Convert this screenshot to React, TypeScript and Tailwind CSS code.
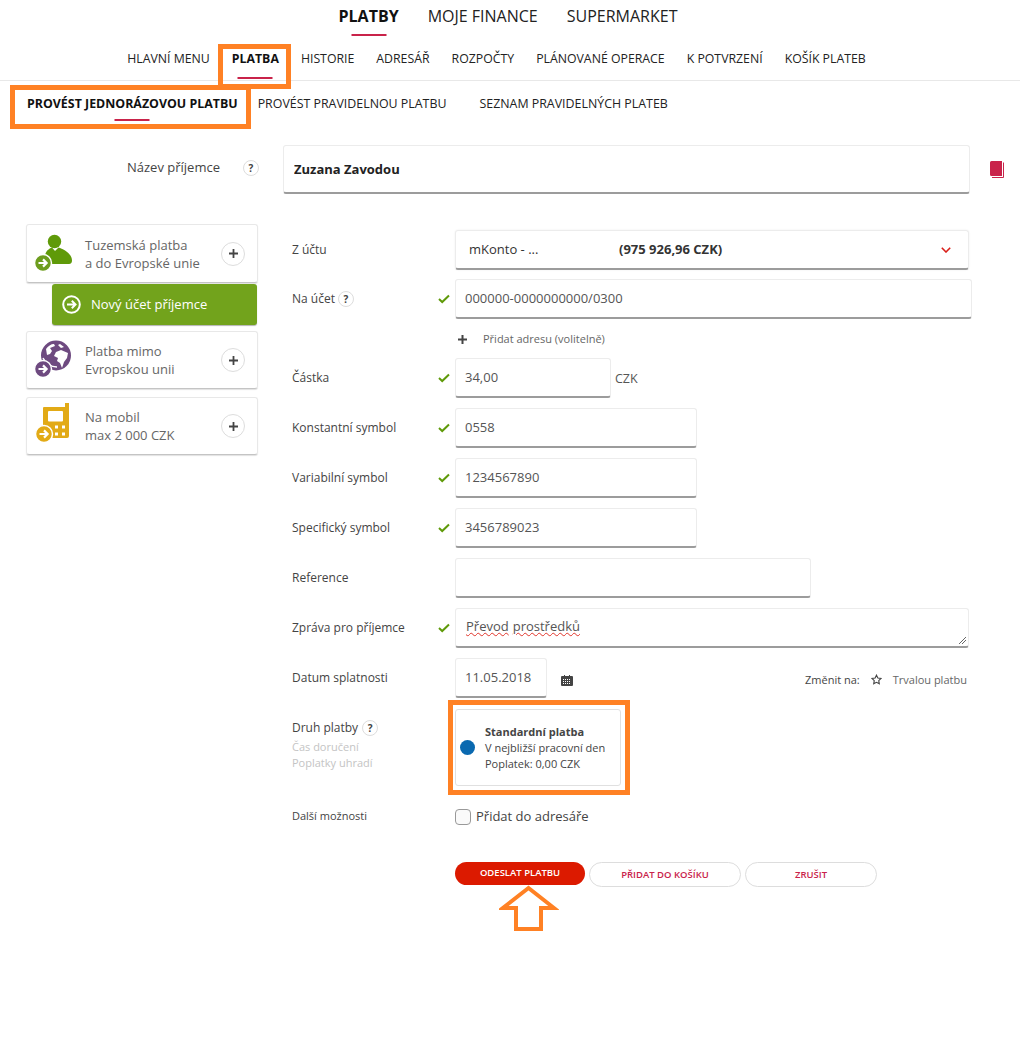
import type { ReactNode } from 'react';

const font = 'font-["Open_Sans",sans-serif]';

function Badge({ color, cx, cy }: { color: string; cx: number; cy: number }) {
  return (
    <g transform={`translate(${cx - 8} ${cy - 8})`}>
      <circle cx="8" cy="8" r="8.500" fill={color} stroke="#fff" strokeWidth="1.500" />
      <path d="M3.500 8h8M8 4.400 11.600 8 8 11.600" fill="none" stroke="#fff" strokeWidth="2.200" />
    </g>
  );
}

function PersonIcon() {
  return (
    <svg className="overflow-visible" width="36" height="38" viewBox="0 0 36 38">
      <circle cx="18.500" cy="6.500" r="6.700" fill="#5f9a09" />
      <path d="M9 22c0-5 3-8 7-9.500l3 3.500 3.500-3.500c5 1.500 13.500 6 13.500 13 0 2-1 3.500-3 3.500H9z" fill="#5f9a09" />
      <Badge color="#6d9d1e" cx={7} cy={28} />
    </svg>
  );
}

function GlobeIcon() {
  return (
    <svg className="overflow-visible" width="36" height="38" viewBox="0 0 36 38">
      <circle cx="20" cy="14.500" r="15" fill="#6e4a80" />
      <path d="M10 8c2-3 5-5 8-5l1 2-5 2 2 3-2 3-3 1zM20 11l5-2 7 3-1 5-3 4-2 6-2-5-3-2 1-3-4-2zM24 3l4 3-3 1-3-3z" fill="#fff" />
      <path d="M7 17c3 6 8 9 14 9" fill="none" stroke="#fff" strokeWidth="1.500" />
      <Badge color="#6e4a80" cx={7} cy={28} />
    </svg>
  );
}

function PhoneIcon() {
  return (
    <svg className="overflow-visible" width="36" height="38" viewBox="0 0 36 38">
      <path d="M7 1a1 1 0 0 1 1-1h21v-4h4v33a2 2 0 0 1-2 2H8a1 1 0 0 1-1-1z" fill="#e2aa16" />
      <rect x="12" y="4" width="15" height="10.500" rx="1" fill="#fff" />
      <g fill="#fff">
        <rect x="19" y="18.500" width="3" height="3" />
        <rect x="26" y="18.500" width="3" height="3" />
        <rect x="19" y="25.500" width="3" height="3" />
        <rect x="26" y="25.500" width="3" height="3" />
      </g>
      <Badge color="#e2aa16" cx={8} cy={27} />
    </svg>
  );
}

function Help({ className = '' }: { className?: string }) {
  return (
    <span className={`flex h-4 w-4 shrink-0 items-center justify-center rounded-full border border-[#ddd] text-[10px] font-bold leading-none text-[#444] ${className}`}>
      ?
    </span>
  );
}

function Check() {
  return (
    <svg width="12" height="10" viewBox="0 0 12 10" fill="none" stroke="#5f9a09" strokeWidth="2">
      <path d="M1 5l3.200 3L11 1.500" />
    </svg>
  );
}

function PlusCircle() {
  return (
    <span className="flex h-6 w-6 items-center justify-center rounded-full border border-[#ddd]">
      <svg width="9" height="9" viewBox="0 0 10 10" stroke="#444" strokeWidth="2">
        <path d="M5 0v10M0 5h10" />
      </svg>
    </span>
  );
}

function SideCard({ icon, lines, h, textPad = '' }: { icon: ReactNode; lines: string[]; h: string; textPad?: string }) {
  return (
    <div className={`flex items-center rounded-[3px] border border-[#e8e8e8] border-b-[#c4c4c4] pl-[9px] pr-[12px] shadow-[0_1px_1px_rgba(0,0,0,0.12)] ${h}`}>
      <div className="w-[36px] shrink-0">{icon}</div>
      <div className={`ml-[13px] flex-1 text-[13px] leading-[18px] text-[#666] ${textPad}`}>
        {lines.map(l => <div key={l}>{l}</div>)}
      </div>
      <PlusCircle />
    </div>
  );
}

function Field({ value, w }: { value: string; w: string }) {
  return (
    <input
      readOnly
      value={value}
      className={`h-[40px] rounded-[3px] border border-[#ececec] border-b-2 border-b-[#9c9c9c] bg-white px-[9px] pb-[2px] text-[13px] text-[#555] outline-none ${w}`}
    />
  );
}

function Row({ label, ok, mt, children }: { label: ReactNode; ok?: boolean; mt: string; children: ReactNode }) {
  return (
    <div className={`flex h-[40px] items-center ${mt}`}>
      <div className="flex w-[146px] items-center pb-[1px] text-[12px] text-[#444]">{label}</div>
      <div className="flex w-[17px] items-center">{ok && <Check />}</div>
      {children}
    </div>
  );
}

function Tab({ children, active, bar }: { children: ReactNode; active?: boolean; bar?: string }) {
  return (
    <div className={`relative whitespace-nowrap ${active ? 'font-bold text-[#111]' : 'text-[#222]'}`}>
      {children}
      {bar && <span className={`absolute left-1/2 h-[2px] w-[35px] -translate-x-1/2 bg-[#c9234a] ${bar}`} />}
    </div>
  );
}

export default function App() {
  return (
    <div className={`relative h-[1047px] w-[1020px] overflow-hidden bg-white ${font}`}>
      {/* Main tabs */}
      <div className="flex h-[44px] items-start justify-center gap-[29px] pt-[6px] pr-[4px] text-[16px] leading-[21px]">
        <Tab active bar="top-[28px]">PLATBY</Tab>
        <Tab>MOJE FINANCE</Tab>
        <Tab>SUPERMARKET</Tab>
      </div>

      {/* Second level */}
      <div className="flex h-[37px] items-start justify-center gap-[22px] border-b border-[#e8e8e8] pt-[6px] pr-[27px] text-[12.3px] leading-[17px]">
        <Tab>HLAVNÍ MENU</Tab>
        <Tab active bar="top-[27px]">PLATBA</Tab>
        <Tab>HISTORIE</Tab>
        <Tab>ADRESÁŘ</Tab>
        <Tab>ROZPOČTY</Tab>
        <Tab>PLÁNOVANÉ OPERACE</Tab>
        <Tab>K POTVRZENÍ</Tab>
        <Tab>KOŠÍK PLATEB</Tab>
      </div>

      {/* Third level */}
      <div className="flex h-[64px] items-start pl-[27px] pt-[14px] text-[12.4px] leading-[17px]">
        <Tab active bar="top-[24px]">PROVÉST JEDNORÁZOVOU PLATBU</Tab>
        <div className="ml-[20px]"><Tab>PROVÉST PRAVIDELNOU PLATBU</Tab></div>
        <div className="ml-[33px]"><Tab>SEZNAM PRAVIDELNÝCH PLATEB</Tab></div>
      </div>

      {/* Recipient */}
      <div className="flex items-center">
        <div className="ml-[127px] w-[116px] pb-[3px] text-[13px] text-[#444]">Název příjemce</div>
        <Help className="mb-[3px]" />
        <input
          readOnly
          value="Zuzana Zavodou"
          className="ml-[24px] h-[49px] w-[687px] rounded-[3px] border border-[#ececec] border-b-2 border-b-[#9c9c9c] px-[10px] text-[13px] font-bold text-[#222] outline-none"
        />
        <svg className="ml-[20px] mb-[1px]" width="14" height="17" viewBox="0 0 14 17">
          <path d="M1.500 0H12v15H1.500A1.500 1.500 0 0 1 0 13.500v-12A1.500 1.500 0 0 1 1.500 0z" fill="#c9234a" />
          <path d="M13.500 1.500v15H2" fill="none" stroke="#c9234a" />
        </svg>
      </div>

      <div className="flex items-start">
        {/* Payment type cards */}
        <div className="ml-[26px] mt-[30px] w-[232px]">
          <SideCard icon={<PersonIcon />} lines={['Tuzemská platba', 'a do Evropské unie']} h="h-[59px]" textPad="pt-[1px]" />
          <div className="ml-[26px] mt-[1px] flex h-[41px] w-[205px] items-center rounded-[3px] bg-[#72a31c] pl-[10px] text-[13px] text-white shadow-[0_1px_1px_rgba(0,0,0,0.3)]">
            <svg width="19" height="19" viewBox="0 0 19 19" fill="none" stroke="#fff" strokeWidth="2">
              <circle cx="9.500" cy="9.500" r="8.300" />
              <path d="M5 9.500h8.500M9.800 5.800l3.700 3.700-3.700 3.700" />
            </svg>
            <span className="ml-[10px]">Nový účet příjemce</span>
          </div>
          <div className="mt-[6px]"><SideCard icon={<GlobeIcon />} lines={['Platba mimo', 'Evropskou unii']} h="h-[58px]" /></div>
          <div className="mt-[8px]"><SideCard icon={<PhoneIcon />} lines={['Na mobil', 'max 2 000 CZK']} h="h-[58px]" /></div>
        </div>

        {/* Form */}
        <div className="ml-[34px] w-[690px]">
          <Row label="Z účtu" mt="mt-[36px]">
            <div className="flex h-[40px] w-[514px] items-center rounded-[3px] border border-[#ececec] border-b-2 border-b-[#9c9c9c] pl-[13px] pr-[17px] text-[13px] text-[#333] shadow-[0_0_2px_rgba(0,0,0,0.08)]">
              <span className="w-[150px]">mKonto - ...</span>
              <span className="flex-1 font-bold">(975 926,96 CZK)</span>
              <svg width="10" height="6" viewBox="0 0 10 6" fill="none" stroke="#d9201a" strokeWidth="1.600"><path d="M.8.800 5 5 9.200.800" /></svg>
            </div>
          </Row>
          <Row label={<>Na účet<Help className="ml-[3px]" /></>} ok mt="mt-[9px]">
            <Field value="000000-0000000000/0300" w="w-[517px]" />
          </Row>
          <div className="ml-[163px] mt-[11px] flex h-[18px] items-center text-[11px] text-[#666]">
            <svg className="ml-[3px]" width="9" height="9" viewBox="0 0 9 9" stroke="#444" strokeWidth="2"><path d="M4.500 0v9M0 4.500h9" /></svg>
            <span className="ml-[16px]">Přidat adresu (volitelně)</span>
          </div>
          <Row label="Částka" ok mt="mt-[10px]">
            <Field value="34,00" w="w-[156px]" />
            <span className="ml-[4px] mt-[2px] text-[12.5px] text-[#555]">CZK</span>
          </Row>
          <Row label="Konstantní symbol" ok mt="mt-[10px]"><Field value="0558" w="w-[242px]" /></Row>
          <Row label="Variabilní symbol" ok mt="mt-[10px]"><Field value="1234567890" w="w-[242px]" /></Row>
          <Row label="Specifický symbol" ok mt="mt-[10px]"><Field value="3456789023" w="w-[242px]" /></Row>
          <Row label="Reference" mt="mt-[10px]"><Field value="" w="w-[356px]" /></Row>
          <Row label="Zpráva pro příjemce" ok mt="mt-[10px]">
            <div className="relative flex h-[40px] w-[514px] items-center rounded-[3px] border border-[#ececec] border-b-2 border-b-[#9c9c9c] px-[10px] pb-[2px] text-[13px] text-[#555]">
              <span className="underline decoration-[#e0342a] decoration-wavy decoration-1">Převod</span>
              <span className="ml-[4px] underline decoration-[#e0342a] decoration-wavy decoration-1">prostředků</span>
              <svg className="absolute bottom-[1px] right-[1px]" width="9" height="9" viewBox="0 0 9 9" stroke="#666"><path d="M1 8l7-7M4 8l4-4" /></svg>
            </div>
          </Row>
          <Row label="Datum splatnosti" mt="mt-[10px]">
            <Field value="11.05.2018" w="w-[92px]" />
            <svg className="ml-[14px] mt-[4px]" width="12" height="11" viewBox="0 0 12 11">
              <path d="M1 1h2V0h1v1h4V0h1v1h2a1 1 0 0 1 1 1v8a1 1 0 0 1-1 1H1a1 1 0 0 1-1-1V2a1 1 0 0 1 1-1z" fill="#444" />
              <path d="M2 4.500h8M2 6.500h8M2 8.500h8" stroke="#fff" strokeDasharray="1 1" />
            </svg>
            <span className="ml-[232px] mt-[5px] text-[11px] text-[#444]">Změnit na:</span>
            <svg className="ml-[11px] mt-[3px]" width="11" height="11" viewBox="0 0 24 24" fill="none" stroke="#444" strokeWidth="2.400">
              <path d="M12 2.500l3 6.300 6.900.9-5 4.800 1.200 6.900-6.100-3.300-6.100 3.300 1.200-6.900-5-4.800 6.900-.9z" />
            </svg>
            <span className="ml-[11px] mt-[5px] text-[11px] text-[#666]">Trvalou platbu</span>
          </Row>
          <div className="mt-[11px] flex items-start">
            <div className="w-[163px] pt-[10px] text-[11px] leading-[16px] text-[#c4c4c4]">
              <div className="mb-[2px] flex items-center text-[12px] leading-[18px] text-[#444]">Druh platby<Help className="ml-[4px]" /></div>
              <div>Čas doručení</div>
              <div>Poplatky uhradí</div>
            </div>
            <div className="flex h-[77px] w-[166px] items-center rounded-[3px] border border-[#e0e0e0] pl-[4px] text-[11px] leading-[16px] text-[#444]">
              <span className="h-[15px] w-[15px] shrink-0 rounded-full bg-[#0a69b0]" />
              <div className="ml-[10px]">
                <div className="font-bold">Standardní platba</div>
                <div>V nejbližší pracovní den</div>
                <div>Poplatek: 0,00 CZK</div>
              </div>
            </div>
          </div>
          <div className="mt-[21px] flex h-[20px] items-center">
            <div className="w-[163px] pb-[2px] text-[11px] text-[#444]">Další možnosti</div>
            <span className="h-[16px] w-[16px] rounded-[4px] border border-[#999] bg-[#fafafa]" />
            <span className="ml-[5px] text-[13px] text-[#444]">Přidat do adresáře</span>
          </div>
          <div className="ml-[163px] mt-[35px] flex gap-[4px] text-[9.5px] font-semibold leading-none">
            <button className="flex h-[23px] w-[130px] items-center justify-center rounded-full bg-[#dc1a00] pb-[1px] text-white">ODESLAT PLATBU</button>
            <button className="flex h-[25px] w-[152px] items-center justify-center rounded-full border border-[#ddd] text-[#c9234a]">PŘIDAT DO KOŠÍKU</button>
            <button className="flex h-[25px] w-[132px] items-center justify-center rounded-full border border-[#ddd] text-[#c9234a]">ZRUŠIT</button>
          </div>
        </div>
      </div>

      {/* Annotations drawn over the page */}
      <div className="absolute left-[218px] top-[44px] h-[45px] w-[73px] border-[5px] border-[#ff8124]" />
      <div className="absolute left-[10px] top-[85px] h-[44px] w-[241px] border-[5px] border-[#ff8124]" />
      <div className="absolute left-[448px] top-[700px] h-[95px] w-[182px] border-[5px] border-[#ff8124]" />
      <svg className="absolute left-[499px] top-[885px]" width="60" height="46" viewBox="0 0 60 46" fill="none" stroke="#ff8124" strokeWidth="4">
        <path d="M29.500 3 55 23H42v21H17V23H4z" />
      </svg>
    </div>
  );
}
